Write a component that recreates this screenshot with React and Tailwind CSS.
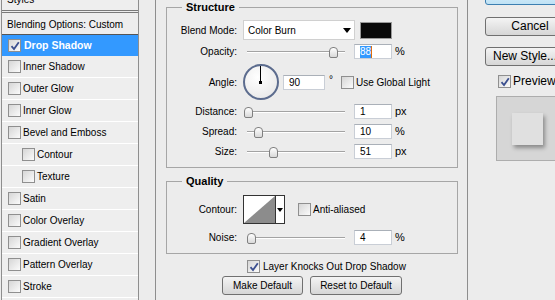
import React from "react";

const styleItems = [
  { name: "Inner Shadow" },
  { name: "Outer Glow" },
  { name: "Inner Glow" },
  { name: "Bevel and Emboss" },
  { name: "Contour", sub: true },
  { name: "Texture", sub: true },
  { name: "Satin" },
  { name: "Color Overlay" },
  { name: "Gradient Overlay" },
  { name: "Pattern Overlay" },
  { name: "Stroke" },
];

const CheckBox = ({ checked = false }) => (
  <div className="w-[13px] h-[13px] shrink-0 border border-[#8f8f8f] bg-gradient-to-br from-[#d6d6d6] to-[#fbfbfb] flex items-center justify-center">
    {checked && (
      <svg width="10" height="10" viewBox="0 0 10 10">
        <path d="M1.5 5.2 L4 8 L8.8 1.2" fill="none" stroke="#3b4f8f" strokeWidth="1.8" />
      </svg>
    )}
  </div>
);

const Label = ({ children }) => (
  <div className="w-[70px] shrink-0 text-right">{children}</div>
);

const NumBox = ({ children, selected = false, w = "w-[38px]" }) => (
  <div className={`${w} h-[15px] shrink-0 bg-white border border-[#c9ced6] border-t-[#aab0b8] flex items-center pl-[5px]`}>
    {selected ? (
      <span className="flex items-center">
        <span className="bg-[#3399ff] text-white leading-[12px]">{children}</span>
        <span className="w-[1px] h-[12px] bg-[#e0700b]" />
      </span>
    ) : (
      children
    )}
  </div>
);

const Slider = ({ thumb }) => (
  <div className="relative w-[104px] h-[15px] shrink-0">
    <div className="absolute left-[4px] right-[2px] top-[7px] h-[2px] border-t border-[#a3a3a3] border-b border-b-white" />
    <div className={`absolute ${thumb} top-[3px] w-[9px] h-[11px] rounded-t-[4px] rounded-b-[2px] border border-[#808080] bg-gradient-to-b from-white to-[#d9d9d9]`} />
  </div>
);

const Button = ({ children, className = "" }) => (
  <div className={`h-[19px] border border-[#707070] rounded-[3px] bg-gradient-to-b from-[#f4f4f4] to-[#d6d6d6] flex items-center justify-center ${className}`}>
    {children}
  </div>
);

const SliderRow = ({ label, thumb, value, unit, className = "" }) => (
  <div className={`flex items-center h-[15px] ${className}`}>
    <Label>{label}</Label>
    <div className="ml-[6px] flex items-center">
      <Slider thumb={thumb} />
      <div className="ml-[7px]">
        <NumBox selected={value === "88"}>{value}</NumBox>
      </div>
      <span className="ml-[3px] text-[11px]">{unit}</span>
    </div>
  </div>
);

export default function App() {
  return (
    <div className="w-[555px] h-[300px] overflow-hidden bg-[#ececec] flex text-[10px] leading-[13px] text-black font-['Liberation_Sans',Arial,sans-serif]">
      {/* styles list */}
      <div className="w-[138px] ml-[1px] shrink-0 border-x border-[#8e8e8e] bg-[#eeeeee] flex flex-col">
        <div className="h-[22px] -mt-[11px] shrink-0 flex items-center pl-[5px] border-b border-[#7a7a7a]">
          Styles
        </div>
        <div className="h-[2px] shrink-0 border-b border-[#7a7a7a]" />
        <div className="h-[22px] shrink-0 flex items-center pl-[5px] pt-[2px] border-b border-[#555]">
          Blending Options: Custom
        </div>
        <div className="h-[21px] shrink-0 flex items-center pl-[6px] bg-[#3399ff] text-white font-bold text-[10.5px]">
          <CheckBox checked />
          <span className="ml-[3px]">Drop Shadow</span>
        </div>
        {styleItems.map((item) => (
          <div
            key={item.name}
            className={`h-[22px] shrink-0 flex items-center border-b border-white ${item.sub ? "pl-[20px]" : "pl-[6px]"}`}
          >
            <CheckBox />
            <span className="ml-[2px]">{item.name}</span>
          </div>
        ))}
      </div>

      {/* drop shadow settings */}
      <div className="w-[313px] ml-[16px] shrink-0 border-x border-[#8e8e8e] flex flex-col">
        <div className="relative ml-[10px] mt-[7px] w-[292px] border border-[#a6a6a6] pb-[8px]">
          <span className="absolute -top-[7px] left-[15px] bg-[#ececec] px-[4px] font-bold text-[11px]">Structure</span>
          <div className="flex items-center h-[20px] mt-[12px]">
            <Label>Blend Mode:</Label>
            <div className="ml-[6px] w-[112px] h-[20px] bg-white border border-[#d0d0d0] flex items-center justify-between pl-[4px] pr-[3px]">
              <span>Color Burn</span>
              <svg width="8" height="5" viewBox="0 0 8 5">
                <path d="M0 0 H8 L4 5 Z" fill="#000" />
              </svg>
            </div>
            <div className="ml-[5px] w-[32px] h-[17px] bg-[#0a0a0a] border border-[#9a9a9a]" />
          </div>
          <SliderRow label="Opacity:" thumb="left-[86px]" value="88" unit="%" className="mt-[4px]" />
          <div className="flex items-center h-[36px] mt-[5px]">
            <Label>Angle:</Label>
            <div className="ml-[6px] relative w-[36px] h-[36px] rounded-full border-2 border-[#5c6c8e] bg-[radial-gradient(circle_at_40%_35%,#ffffff,#e4e4e4)]">
              <div className="absolute left-[15px] top-0 w-[1px] h-[16px] bg-black" />
              <div className="absolute left-[14px] top-[15px] w-[3px] h-[3px] bg-black" />
            </div>
            <div className="ml-[4px]">
              <NumBox w="w-[42px]">90</NumBox>
            </div>
            <span className="ml-[4px] -mt-[5px]">°</span>
            <div className="ml-[8px]">
              <CheckBox />
            </div>
            <span className="ml-[2px]">Use Global Light</span>
          </div>
          <SliderRow label="Distance:" thumb="left-[1px]" value="1" unit="px" className="mt-[4px]" />
          <SliderRow label="Spread:" thumb="left-[11px]" value="10" unit="%" className="mt-[5px]" />
          <SliderRow label="Size:" thumb="left-[26px]" value="51" unit="px" className="mt-[5px]" />
        </div>

        <div className="relative ml-[10px] mt-[13px] w-[292px] border border-[#a6a6a6] pb-[8px]">
          <span className="absolute -top-[7px] left-[15px] bg-[#ececec] px-[4px] font-bold text-[11px]">Quality</span>
          <div className="flex items-center h-[29px] mt-[13px]">
            <Label>Contour:</Label>
            <div className="ml-[6px] w-[42px] h-[29px] border border-[#333] bg-white flex">
              <svg width="31" height="27" viewBox="0 0 31 27" className="block">
                <path d="M0 27 L31 0 L31 27 Z" fill="#8c8c8c" />
              </svg>
              <div className="flex-1 border-l border-[#333] flex items-center justify-center">
                <svg width="6" height="4" viewBox="0 0 6 4">
                  <path d="M0 0 H6 L3 4 Z" fill="#000" />
                </svg>
              </div>
            </div>
            <div className="ml-[13px]">
              <CheckBox />
            </div>
            <span className="ml-[2px]">Anti-aliased</span>
          </div>
          <SliderRow label="Noise:" thumb="left-[4px]" value="4" unit="%" className="mt-[6px]" />
        </div>

        <div className="flex items-center mt-[6px] pl-[91px] h-[13px]">
          <CheckBox checked />
          <span className="ml-[3px]">Layer Knocks Out Drop Shadow</span>
        </div>
        <div className="flex mt-[3px] pl-[66px] gap-[7px]">
          <Button className="w-[81px]">Make Default</Button>
          <Button className="w-[92px]">Reset to Default</Button>
        </div>
      </div>

      {/* buttons & preview */}
      <div className="flex flex-col pl-[17px] shrink-0">
        <div className="w-[90px] h-[22px] -mt-[17px] border border-[#3c7fb1] rounded-[3px] bg-gradient-to-b from-[#e8f5fc] to-[#bfe2f5] flex items-end justify-center pb-[6px] text-[12px]">
          OK
        </div>
        <Button className="w-[90px] h-[17px] mt-[12px] text-[12px]">Cancel</Button>
        <Button className="w-[90px] h-[17px] mt-[11px] text-[12px] justify-start pl-[7px]">New Style...</Button>
        <div className="flex items-center mt-[9px] ml-[13px] h-[13px]">
          <CheckBox checked />
          <span className="ml-[2px] text-[12px]">Preview</span>
        </div>
        <div className="ml-[11px] mt-[8px] w-[80px] h-[65px] border border-[#adadad] bg-[#d6d6d6]">
          <div className="ml-[15px] mt-[16px] w-[31px] h-[32px] bg-[#e0e0e0] shadow-[2px_3px_4px_rgba(0,0,0,0.35)]" />
        </div>
      </div>
    </div>
  );
}
